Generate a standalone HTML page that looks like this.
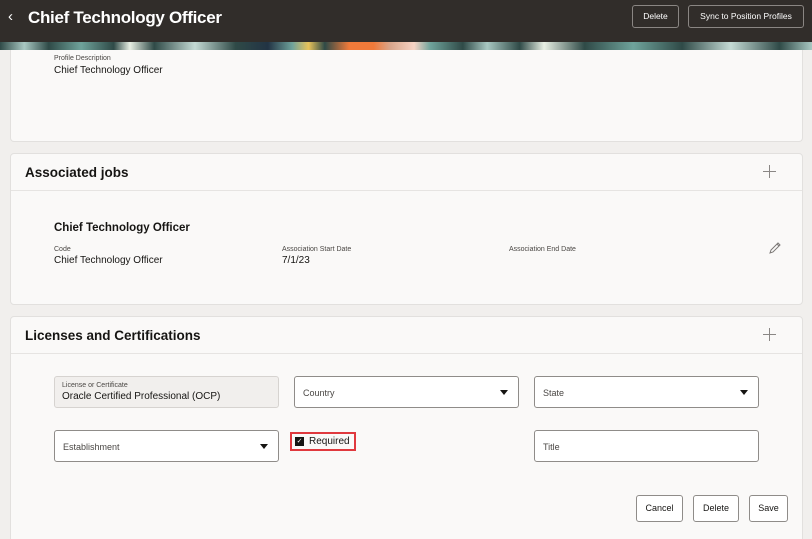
<!DOCTYPE html>
<html><head><style>
*{box-sizing:border-box;margin:0;padding:0}
html,body{width:812px;height:539px;overflow:hidden}
body{background:#f1efed;font-family:"Liberation Sans",sans-serif;color:#161513;position:relative}
.hdr{position:absolute;left:0;top:0;width:812px;height:42px;background:#312d2a;color:#fff}
.hdr .t{position:absolute;left:28px;top:8px;font-size:17px;font-weight:bold;letter-spacing:-0.3px}
.hdr .bk{position:absolute;left:8px;top:8px;font-size:15px}
.hb{position:absolute;top:5px;height:23px;border:1px solid #8a8683;border-radius:3px;font-size:8.5px;line-height:21px;text-align:center;color:#fff}
.ban{position:absolute;left:0;top:42px;width:812px;height:8px;background:linear-gradient(90deg,#2f4a47 0,#a9c8c2 3%,#2f4a47 6%,#6fa39b 10%,#2f4a47 14%,#e8efe3 16%,#2f4a47 19%,#c4dad4 24%,#2f4a47 29%,#234 33%,#6fa39b 36%,#e8c25a 38%,#2f4a47 40%,#f07a3a 43%,#f07a3a 46%,#d9a58a 48%,#f6d3c4 51%,#6fa39b 53%,#2f4a47 57%,#a9c8c2 60%,#2f4a47 64%,#e8efe3 67%,#2f4a47 72%,#6fa39b 78%,#2f4a47 84%,#c4dad4 90%,#2f4a47 96%,#a9c8c2 100%)}
.card{position:absolute;left:10px;width:793px;background:#faf9f8;border:1px solid #e2e0de;border-radius:4px}
.ch{height:37px;border-bottom:1px solid #e6e4e2;position:relative}
.ch .h{position:absolute;left:14px;top:11px;font-size:13.5px;font-weight:bold}
.plus{position:absolute;right:26px;top:11px;width:13px;height:13px}
.plus:before,.plus:after{content:"";position:absolute;background:#8a8785}
.plus:before{left:6px;top:0;width:1px;height:13px}.plus:after{top:6px;left:0;height:1px;width:13px}
.lbl{position:absolute;font-size:7px;color:#4a4744}
.val{position:absolute;font-size:10px}
.fld{position:absolute;height:32px;border:1px solid #8f8c89;border-radius:3px;background:#fff;font-size:9px;color:#4a4744}
.fld span{position:absolute;left:8px;top:11px}
.fld i{position:absolute;right:10px;top:13px;border-left:4px solid transparent;border-right:4px solid transparent;border-top:5px solid #161513}
.btn{position:absolute;top:495px;height:27px;border:1px solid #8f8c89;border-radius:3px;background:#fff;font-size:9px;line-height:25px;text-align:center}
</style></head><body>
<div class="hdr"><span class="bk">&#8249;</span><span class="t">Chief Technology Officer</span>
<div class="hb" style="left:632px;width:47px">Delete</div>
<div class="hb" style="left:688px;width:116px">Sync to Position Profiles</div></div>
<div class="ban"></div>
<div class="card" style="top:50px;height:92px;border-top:none;border-radius:0 0 4px 4px">
<div class="lbl" style="left:43px;top:5px">Profile Description</div>
<div class="val" style="left:43px;top:15px">Chief Technology Officer</div></div>
<div class="card" style="top:153px;height:152px"><div class="ch"><span class="h">Associated jobs</span><div class="plus"></div></div>
<div class="val" style="left:43px;top:68px;font-size:11.5px;font-weight:bold">Chief Technology Officer</div>
<div class="lbl" style="left:43px;top:92px">Code</div><div class="val" style="left:43px;top:101px">Chief Technology Officer</div>
<div class="lbl" style="left:271px;top:92px">Association Start Date</div><div class="val" style="left:271px;top:101px">7/1/23</div>
<div class="lbl" style="left:498px;top:92px">Association End Date</div>
<svg style="position:absolute;left:757px;top:87px" width="14" height="14" viewBox="0 0 14 14"><path d="M2 12 L3 9 L10 2 L12 4 L5 11 Z M9 3 L11 5" fill="none" stroke="#7a7775" stroke-width="1"/></svg>
</div>
<div class="card" style="top:316px;height:230px"><div class="ch"><span class="h">Licenses and Certifications</span><div class="plus"></div></div></div>
<div class="fld" style="left:54px;top:376px;width:225px;background:#f1efed;border-color:#d6d3d0"><div style="position:absolute;left:7px;top:5px;font-size:7px">License or Certificate</div><div style="position:absolute;left:7px;top:14px;font-size:10px;color:#161513">Oracle Certified Professional (OCP)</div></div>
<div class="fld" style="left:294px;top:376px;width:225px"><span>Country</span><i></i></div>
<div class="fld" style="left:534px;top:376px;width:225px"><span>State</span><i></i></div>
<div class="fld" style="left:54px;top:430px;width:225px"><span>Establishment</span><i></i></div>
<div style="position:absolute;left:290px;top:432px;width:66px;height:19px;border:2px solid #e0393e;background:#faf9f8"><div style="position:absolute;left:3px;top:3px;width:9px;height:9px;background:#161513;color:#fff;font-size:7px;line-height:9px;text-align:center">&#10003;</div><span style="position:absolute;left:17px;top:2px;font-size:10px">Required</span></div>
<div class="fld" style="left:534px;top:430px;width:225px"><span>Title</span></div>
<div class="btn" style="left:636px;width:47px">Cancel</div>
<div class="btn" style="left:693px;width:46px">Delete</div>
<div class="btn" style="left:749px;width:39px">Save</div>
</body></html>
